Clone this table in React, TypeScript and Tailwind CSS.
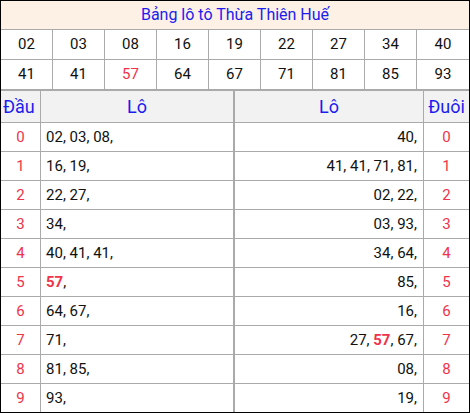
import React from "react";

const row1 = ["02", "03", "08", "16", "19", "22", "27", "34", "40"];
const row2 = ["41", "41", "57", "64", "67", "71", "81", "85", "93"];
const red2 = new Set([2]);

const dau: string[][] = [
  ["02", "03", "08"],
  ["16", "19"],
  ["22", "27"],
  ["34"],
  ["40", "41", "41"],
  ["57"],
  ["64", "67"],
  ["71"],
  ["81", "85"],
  ["93"],
];
const duoi: string[][] = [
  ["40"],
  ["41", "41", "71", "81"],
  ["02", "22"],
  ["03", "93"],
  ["34", "64"],
  ["85"],
  ["16"],
  ["27", "57", "67"],
  ["08"],
  ["19"],
];

function NumList({ items }: { items: string[] }) {
  return (
    <>
      {items.map((n, i) => (
        <React.Fragment key={i}>
          {i > 0 ? " " : ""}
          {n === "57" ? <span className="font-bold text-[#f0334a]">57</span> : n}
          ,
        </React.Fragment>
      ))}
    </>
  );
}

export default function App() {
  return (
    <div
      className="w-[470px] h-[413px] border border-black bg-white text-[15px] text-[#111] flex flex-col overflow-hidden"
      style={{ fontFamily: "Roboto, 'Liberation Sans', sans-serif" }}
    >
      <div className="h-[29px] shrink-0 border-b border-[#aaaaaa] bg-[#fdf1e6] flex items-center justify-center text-[#1c1cf0] text-[16px]">
        Bảng lô tô Thừa Thiên Huế
      </div>
      <div className="h-[30px] shrink-0 grid grid-cols-9 border-b border-[#aaaaaa]">
        {row1.map((n, i) => (
          <div
            key={i}
            className={`flex items-center justify-center ${i < 8 ? "border-r border-[#aaaaaa]" : ""}`}
          >
            {n}
          </div>
        ))}
      </div>
      <div className="h-[31px] shrink-0 grid grid-cols-9 border-b-2 border-[#aaaaaa]">
        {row2.map((n, i) => (
          <div
            key={i}
            className={`flex items-center justify-center ${i < 8 ? "border-r border-[#aaaaaa]" : ""} ${red2.has(i) ? "text-[#f0334a]" : ""}`}
          >
            {n}
          </div>
        ))}
      </div>
      <div className="h-[32px] shrink-0 flex bg-[#f2f2f2] border-b border-[#aaaaaa] text-[#1c1cf0] text-[18px]">
        <div className="w-[40px] border-r border-[#aaaaaa] flex items-center pl-[2px]">Đầu</div>
        <div className="w-[194px] border-r-2 border-[#aaaaaa] flex items-center justify-center">Lô</div>
        <div className="w-[189px] border-r border-[#aaaaaa] flex items-center justify-center">Lô</div>
        <div className="flex-1 flex items-center justify-center">Đuôi</div>
      </div>
      {dau.map((d, i) => (
        <div
          key={i}
          className={`h-[28px] shrink-0 flex ${i < 9 ? "border-b border-[#aaaaaa] h-[29px]" : ""}`}
        >
          <div className="w-[40px] border-r border-[#aaaaaa] flex items-center justify-center text-[#f0334a]">
            {i}
          </div>
          <div className="w-[194px] border-r-2 border-[#aaaaaa] flex items-center pl-[5px]">
            <span>
              <NumList items={d} />
            </span>
          </div>
          <div className="w-[189px] border-r border-[#aaaaaa] flex items-center justify-end pr-[6px]">
            <span>
              <NumList items={duoi[i]} />
            </span>
          </div>
          <div className="flex-1 flex items-center justify-center text-[#f0334a]">{i}</div>
        </div>
      ))}
    </div>
  );
}
